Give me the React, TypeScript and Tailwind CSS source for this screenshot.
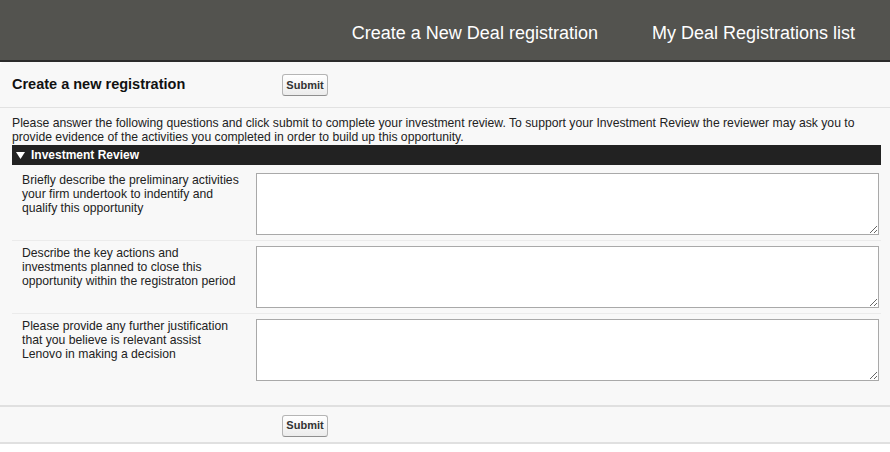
import React from "react";

const questions = [
  "Briefly describe the preliminary activities your firm undertook to indentify and qualify this opportunity",
  "Describe the key actions and investments planned to close this opportunity within the registraton period",
  "Please provide any further justification that you believe is relevant assist Lenovo in making a decision",
];

function SubmitButton() {
  return (
    <button
      type="button"
      className="h-[22px] w-[46px] rounded-[3px] border border-[#b5b5b5] border-b-[#8f8f8f] bg-gradient-to-b from-white to-[#ececec] text-[11px] font-bold leading-none text-[#333]"
    >
      Submit
    </button>
  );
}

export default function App() {
  return (
    <div className="w-[890px] h-[452px] bg-white font-['Liberation_Sans',Arial,sans-serif] text-[#222]">
      {/* top nav */}
      <div className="h-[62px] bg-[#53534f] border-b-[2px] border-[#2b2b2b] flex justify-end gap-[54px] pr-[35px] pt-[23px]">
        <span className="text-[18px] leading-[21px] text-white">Create a New Deal registration</span>
        <span className="text-[18px] leading-[21px] text-white">My Deal Registrations list</span>
      </div>

      <div className="bg-[#f8f8f8] rounded-tl-[4px]">
        <div className="h-[46px] pt-[1px] flex items-center pl-[12px] border-b border-[#e2e2e2]">
          <div className="w-[270px] text-[14.5px] font-bold text-[#111]">Create a new registration</div>
          <SubmitButton />
        </div>

        <div className="pl-[12px] pr-[9px] pt-[8px]">
          <p className="text-[12.2px] leading-[14px] mb-[1px]">
            Please answer the following questions and click submit to complete your investment review. To support your
            Investment Review the reviewer may ask you to provide evidence of the activities you completed in order to
            build up this opportunity.
          </p>

          <div className="h-[20px] bg-[#222] flex items-center pl-[4px] gap-[6px] text-white text-[12px] font-bold">
            <svg width="9" height="8" viewBox="0 0 9 8">
              <polygon points="0,1 9,1 4.5,8" fill="#fff" />
            </svg>
            <span>Investment Review</span>
          </div>

          <div className="pb-[19px]">
            {questions.map((q, i) => (
              <div
                key={i}
                className={`flex pl-[10px] ${i === 0 ? "pt-[8px]" : "pt-[5px] border-t border-[#ebebeb]"} pb-[5px]`}
              >
                <div className="w-[234px] pr-[14px] text-[12.2px] leading-[14px] text-[#222]">{q}</div>
                <textarea className="w-[623px] h-[62px] border border-[#a9a9a9] bg-white" />
              </div>
            ))}
          </div>
        </div>

        <div className="border-t-[2px] border-b-[2px] border-[#e0e0e0] pt-[5px] pb-[5px] pl-[282px]">
          <SubmitButton />
        </div>
      </div>
    </div>
  );
}
